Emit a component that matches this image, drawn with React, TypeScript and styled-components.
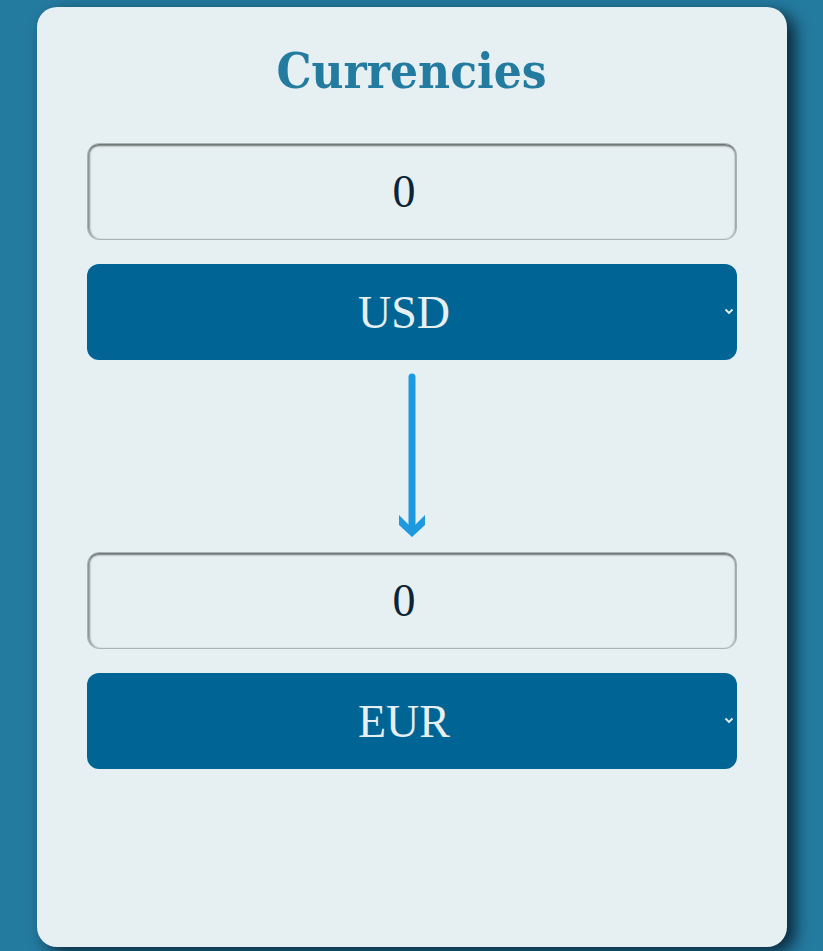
import React, { useState } from 'react';
import styled, { createGlobalStyle } from 'styled-components';

const GlobalStyle = createGlobalStyle`
  html, body {
    margin: 0;
    padding: 0;
    background: #247ba0;
  }
  body {
    font-family: "Liberation Serif", "Times New Roman", serif;
  }
`;

const Page = styled.div`
  display: flex;
  justify-content: center;
  padding: 7px 0 4px;
`;

const Card = styled.div`
  width: 750px;
  height: 940px;
  box-sizing: border-box;
  padding: 0 50px;
  background: #e6eff1;
  border-radius: 20px;
  box-shadow: 8px 6px 16px rgba(5, 25, 40, 0.85);
  display: flex;
  flex-direction: column;
`;

const Title = styled.h1`
  margin: 14px 0 0;
  height: 122px;
  text-align: center;
  font-family: "DejaVu Serif Condensed", "DejaVu Serif", serif;
  font-stretch: condensed;
  font-weight: bold;
  font-size: 49px;
  line-height: 100px;
  color: #247ba0;
`;

const AmountInput = styled.input`
  box-sizing: border-box;
  width: 100%;
  height: 97px;
  padding: 0 15px 0 0;
  border: 1px solid #a9b2b4;
  border-radius: 12px;
  background: #e6eff1;
  box-shadow: inset 0 3px 2px -1px #6a7171, inset 3px 0 2px -1px #8c9393,
    inset -2px 0 2px -1px #8c9393;
  text-align: center;
  font-family: "Liberation Serif", "Times New Roman", serif;
  font-size: 46px;
  color: #0c2433;
  outline: none;
`;

const SelectWrap = styled.div`
  position: relative;
  margin-top: 24px;
`;

const CurrencySelect = styled.select`
  box-sizing: border-box;
  width: 100%;
  height: 96px;
  padding: 0 15px 0 0;
  border: none;
  border-radius: 12px;
  background: #006594;
  color: #e6eff1;
  font-family: "Liberation Serif", "Times New Roman", serif;
  font-size: 46px;
  text-align: center;
  text-align-last: center;
  appearance: none;
  outline: none;
`;

const Chevron = styled.svg`
  position: absolute;
  right: 3px;
  top: 44px;
  pointer-events: none;
`;

const ArrowBox = styled.div`
  display: flex;
  justify-content: center;
  height: 192px;
  padding-top: 13px;
  box-sizing: border-box;
`;

const currencies = ['USD', 'EUR', 'GBP', 'JPY'];

const Picker = ({ value, onChange }: { value: string; onChange: (v: string) => void }) => (
  <SelectWrap>
    <CurrencySelect value={value} onChange={(e) => onChange(e.target.value)}>
      {currencies.map((c) => (
        <option key={c} value={c}>
          {c}
        </option>
      ))}
    </CurrencySelect>
    <Chevron width="10" height="7" viewBox="0 0 10 7">
      <path d="M1.5 1.5 L5 5 L8.5 1.5" fill="none" stroke="#e6eff1" strokeWidth="1.8" />
    </Chevron>
  </SelectWrap>
);

const App = () => {
  const [from, setFrom] = useState('USD');
  const [to, setTo] = useState('EUR');

  return (
    <Page>
      <GlobalStyle />
      <Card>
        <Title>Currencies</Title>
        <AmountInput defaultValue="0" />
        <Picker value={from} onChange={setFrom} />
        <ArrowBox>
          <svg width="30" height="166" viewBox="0 0 30 166">
            <path d="M15 4 V156" stroke="#1e98de" strokeWidth="7" strokeLinecap="round" fill="none" />
            <path d="M2 142 L15 155 L28 142 V152 L15 164 L2 152 Z" fill="#1e98de" />
          </svg>
        </ArrowBox>
        <AmountInput defaultValue="0" />
        <Picker value={to} onChange={setTo} />
      </Card>
    </Page>
  );
};

export default App;
